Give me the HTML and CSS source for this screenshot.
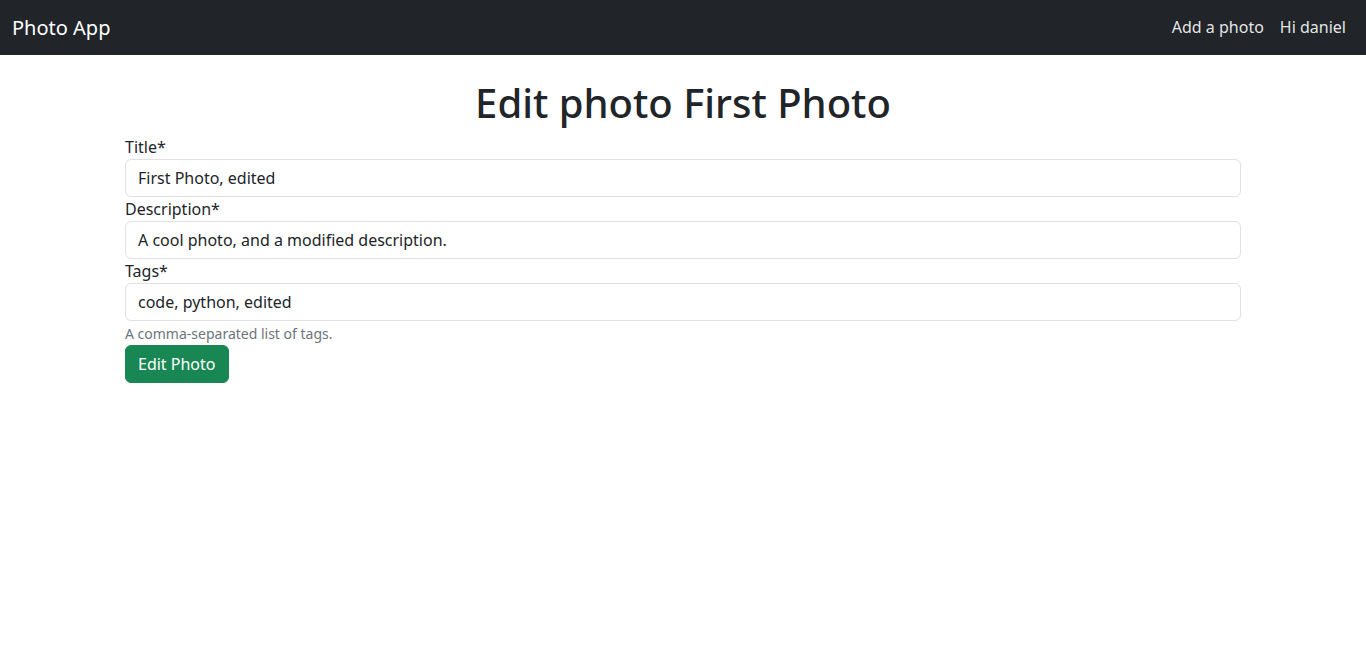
FILE: index.html
```html
<!DOCTYPE html>
<html lang="en">
<head>
<meta charset="utf-8">
<title>Edit photo</title>
<link rel="stylesheet" href="styles.css">
</head>
<body>
<nav class="navbar">
  <a class="brand" href="#">Photo App</a>
  <div class="nav-links">
    <a class="nav-link" href="#">Add a photo</a>
    <a class="nav-link" href="#">Hi daniel</a>
  </div>
</nav>
<main class="container">
  <h1 class="page-title">Edit photo First Photo</h1>
  <form class="form">
    <label class="label" for="title">Title*</label>
    <input class="input" id="title" type="text" value="First Photo, edited">
    <label class="label" for="desc">Description*</label>
    <input class="input" id="desc" type="text" value="A cool photo, and a modified description.">
    <label class="label" for="tags">Tags*</label>
    <input class="input" id="tags" type="text" value="code, python, edited">
    <div class="form-text">A comma-separated list of tags.</div>
    <div><button class="btn" type="button">Edit Photo</button></div>
  </form>
</main>
</body>
</html>
```

FILE: styles.css
```css
* { box-sizing: border-box; }
body {
  margin: 0;
  font-family: "Noto Sans", "Liberation Sans", sans-serif;
  font-size: 16px;
  line-height: 1.5;
  color: #212529;
  background: #fff;
}
.navbar {
  height: 55px;
  background: #212529;
  display: flex;
  align-items: center;
  justify-content: space-between;
  padding: 0 12px;
}
.brand {
  color: #fff;
  font-size: 20px;
  line-height: 30px;
  text-decoration: none;
}
.nav-links {
  display: flex;
  padding-bottom: 2px;
}
.nav-link {
  color: rgba(255, 255, 255, 0.9);
  text-decoration: none;
  padding: 0 8px;
  line-height: 24px;
}
.container {
  max-width: 1140px;
  margin: 0 auto;
  padding: 0 12px;
}
.page-title {
  margin: 24px 0 8px;
  font-size: 40px;
  font-weight: 500;
  line-height: 1.2;
  text-align: center;
}
.form {
  display: flex;
  flex-direction: column;
}
.label {
  display: block;
  line-height: 24px;
}
.input {
  display: block;
  width: 100%;
  height: 38px;
  padding: 6px 12px;
  font: inherit;
  color: #212529;
  border: 1px solid #dee2e6;
  border-radius: 6px;
  background: #fff;
}
.form-text {
  font-size: 14px;
  line-height: 22px;
  padding-top: 2px;
  color: #6c757d;
}
.btn {
  font: inherit;
  color: #fff;
  background: #198754;
  border: 1px solid #198754;
  border-radius: 6px;
  padding: 6px 12px;
  line-height: 24px;
  cursor: pointer;
}
```
